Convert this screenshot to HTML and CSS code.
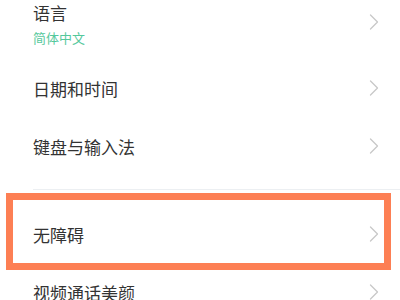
FILE: index.html
```html
<!DOCTYPE html>
<html lang="zh-CN">
<head>
  <meta charset="UTF-8">
  <meta name="viewport" content="width=device-width, initial-scale=1.0">
  <title>设置</title>
  <link rel="stylesheet" href="styles.css">
</head>
<body>
  <div class="list">
    <div class="row row-first">
      <div class="texts">
        <div class="label">语言</div>
        <div class="sub">简体中文</div>
      </div>
      <svg class="chev" width="10" height="16" viewBox="0 0 10 16"><polyline points="1.5,1 8.5,8 1.5,15"/></svg>
    </div>
    <div class="row">
      <div class="label">日期和时间</div>
      <svg class="chev" width="10" height="16" viewBox="0 0 10 16"><polyline points="1.5,1 8.5,8 1.5,15"/></svg>
    </div>
    <div class="row">
      <div class="label">键盘与输入法</div>
      <svg class="chev" width="10" height="16" viewBox="0 0 10 16"><polyline points="1.5,1 8.5,8 1.5,15"/></svg>
    </div>

    <div class="divider"></div>

    <div class="row">
      <div class="label">无障碍</div>
      <svg class="chev" width="10" height="16" viewBox="0 0 10 16"><polyline points="1.5,1 8.5,8 1.5,15"/></svg>
    </div>
    <div class="row">
      <div class="label">视频通话美颜</div>
      <svg class="chev" width="10" height="16" viewBox="0 0 10 16"><polyline points="1.5,1 8.5,8 1.5,15"/></svg>
    </div>
  </div>

  <div class="highlight"></div>
</body>
</html>
```

FILE: styles.css
```css
body {
  margin: 0;
  background: #fff;
  font-family: "Noto Sans CJK SC", "Noto Sans", sans-serif;
  color: #333;
  overflow: hidden;
}
.list {
  display: flex;
  flex-direction: column;
}
.row {
  display: flex;
  justify-content: space-between;
  align-items: center;
  height: 58px;
  padding: 0 21px 0 33px;
}
.row-first {
  height: 59px;
  align-items: flex-start;
}
.row-first .chev {
  margin-top: 14px;
}
.label {
  font-size: 17px;
  line-height: 25px;
}
.sub {
  font-size: 13px;
  line-height: 25px;
  color: #55c89c;
}
.chev {
  flex-shrink: 0;
}
.chev polyline {
  fill: none;
  stroke: #c8c8c8;
  stroke-width: 1.3;
  stroke-linecap: round;
  stroke-linejoin: round;
}
.divider {
  height: 1px;
  background: #eceff2;
  margin: 14px 0 15px 33px;
}
.highlight {
  position: absolute;
  left: 6px;
  top: 193px;
  width: 371px;
  height: 63px;
  border: 7px solid #fd7f54;
}
```
